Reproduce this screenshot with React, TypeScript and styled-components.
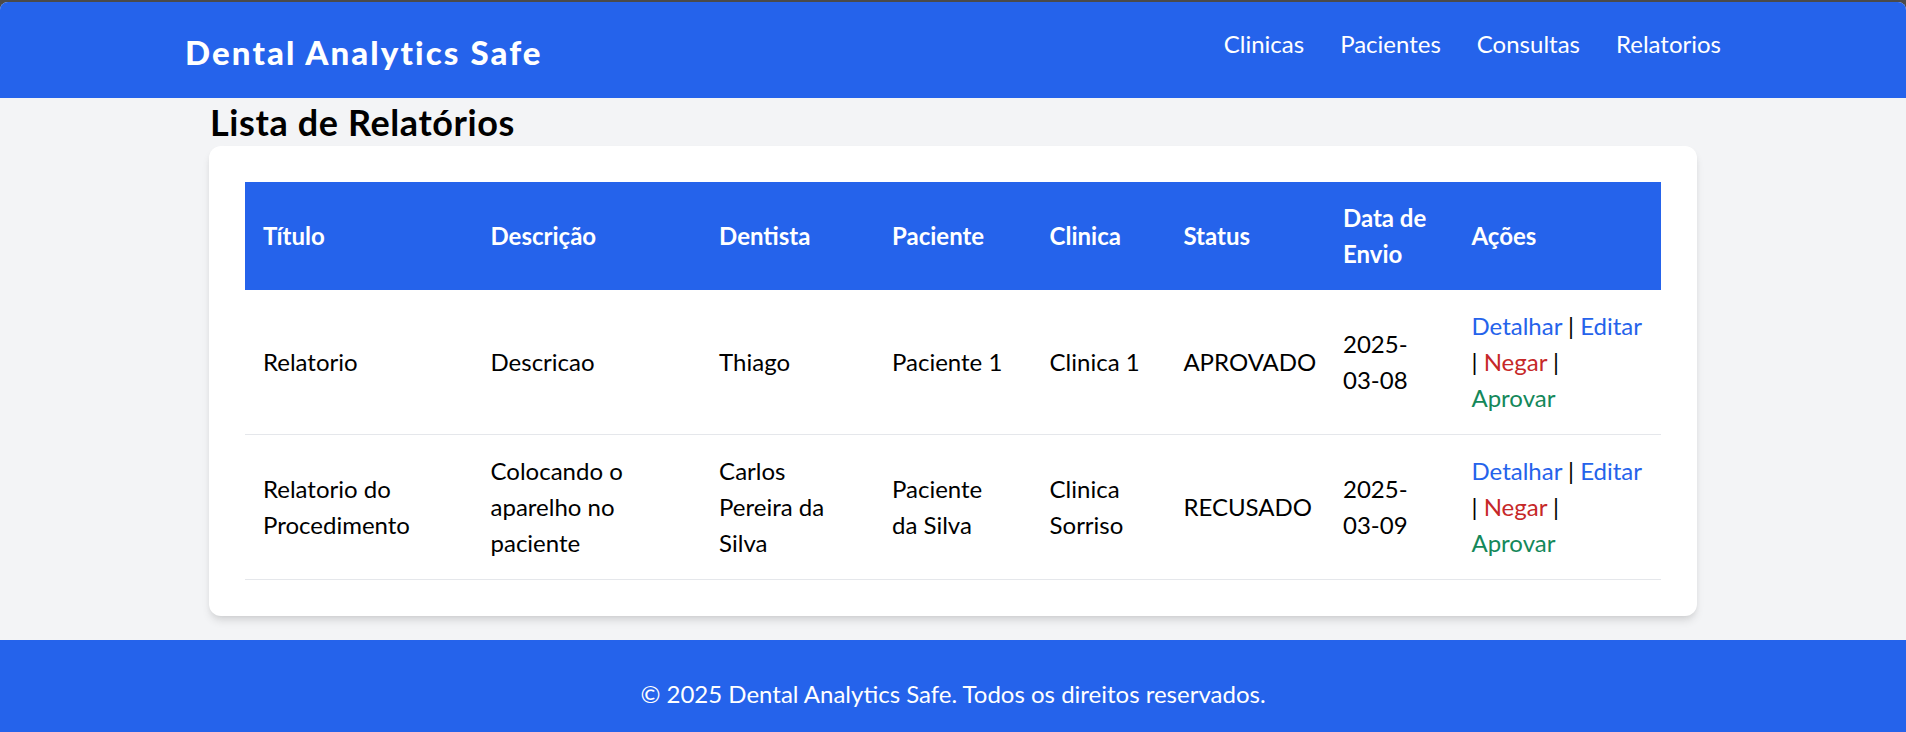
import React from "react";
import styled, { createGlobalStyle } from "styled-components";

const GlobalStyle = createGlobalStyle`
  html, body {
    margin: 0;
    padding: 0;
    background: #4a4a4a;
  }
  body {
    font-family: Lato, "Noto Sans", "Liberation Sans", sans-serif;
    color: #000;
  }
  * { box-sizing: border-box; }
`;

const Frame = styled.div`
  margin-top: 2px;
  border-radius: 8px 8px 0 0;
  overflow: hidden;
  background: #f3f4f6;
`;

const Header = styled.header`
  background: #2563eb;
  height: 96px;
`;

const HeaderInner = styled.div`
  width: 1536px;
  margin: 0 auto;
  padding-top: 24px;
  display: flex;
  justify-content: space-between;
  align-items: flex-start;
`;

const Brand = styled.div`
  margin-top: 5px;
  font-size: 33px;
  line-height: 42px;
  font-weight: 900;
  letter-spacing: 2.1px;
  color: #fff;
`;

const Nav = styled.nav`
  display: flex;
  gap: 36px;
`;

const NavLink = styled.a`
  font-size: 24px;
  line-height: 36px;
  color: #fff;
  text-decoration: none;
`;

const Main = styled.main`
  width: 1536px;
  margin: 0 auto;
  padding: 0 24px;
`;

const PageTitle = styled.h1`
  margin: 0;
  font-size: 36px;
  line-height: 48px;
  font-weight: 700;
  letter-spacing: 0.6px;
  padding-left: 1px;
`;

const Card = styled.section`
  background: #fff;
  border-radius: 12px;
  padding: 36px;
  margin-bottom: 24px;
  box-shadow: 0 6px 9px -1.5px rgba(0, 0, 0, 0.1), 0 3px 6px -3px rgba(0, 0, 0, 0.1);
`;

const Table = styled.table`
  width: 100%;
  border-collapse: collapse;
  table-layout: fixed;
  font-size: 24px;
  line-height: 36px;
`;

const Th = styled.th`
  background: #2563eb;
  color: #fff;
  font-weight: 700;
  text-align: left;
  padding: 18px;
  vertical-align: middle;
`;

const Td = styled.td`
  padding: 18px;
  border-bottom: 1px solid #e5e7eb;
  vertical-align: middle;
`;

const Action = styled.a<{ $tone: "blue" | "red" | "green" }>`
  text-decoration: none;
  color: ${(p) =>
    p.$tone === "blue" ? "#2563eb" : p.$tone === "red" ? "#c62828" : "#14885a"};
`;

const Footer = styled.footer`
  background: #2563eb;
  color: #fff;
  text-align: center;
  padding: 36px 0;
  font-size: 24px;
  line-height: 36px;
`;

const columns = [227.5, 228.6, 172.9, 157.6, 133.8, 159.6, 128.5, 208];
const headers = ["Título", "Descrição", "Dentista", "Paciente", "Clinica", "Status", "Data de Envio", "Ações"];

const rows = [
  {
    titulo: "Relatorio",
    descricao: "Descricao",
    dentista: "Thiago",
    paciente: "Paciente 1",
    clinica: "Clinica 1",
    status: "APROVADO",
    data: "2025-03-08",
  },
  {
    titulo: "Relatorio do Procedimento",
    descricao: "Colocando o aparelho no paciente",
    dentista: "Carlos Pereira da Silva",
    paciente: "Paciente da Silva",
    clinica: "Clinica Sorriso",
    status: "RECUSADO",
    data: "2025-03-09",
  },
];

export default function App() {
  return (
    <>
      <GlobalStyle />
      <Frame>
        <Header>
          <HeaderInner>
            <Brand>Dental Analytics Safe</Brand>
            <Nav>
              <NavLink href="#">Clinicas</NavLink>
              <NavLink href="#">Pacientes</NavLink>
              <NavLink href="#">Consultas</NavLink>
              <NavLink href="#">Relatorios</NavLink>
            </Nav>
          </HeaderInner>
        </Header>
        <Main>
          <PageTitle>Lista de Relatórios</PageTitle>
          <Card>
            <Table>
              <colgroup>
                {columns.map((w, i) => (
                  <col key={i} style={{ width: w }} />
                ))}
              </colgroup>
              <thead>
                <tr>
                  {headers.map((h) => (
                    <Th key={h}>{h}</Th>
                  ))}
                </tr>
              </thead>
              <tbody>
                {rows.map((r) => (
                  <tr key={r.titulo}>
                    <Td>{r.titulo}</Td>
                    <Td>{r.descricao}</Td>
                    <Td>{r.dentista}</Td>
                    <Td>{r.paciente}</Td>
                    <Td>{r.clinica}</Td>
                    <Td>{r.status}</Td>
                    <Td>{r.data}</Td>
                    <Td>
                      <Action $tone="blue" href="#">Detalhar</Action> |{" "}
                      <Action $tone="blue" href="#">Editar</Action> |{" "}
                      <Action $tone="red" href="#">Negar</Action> |{" "}
                      <Action $tone="green" href="#">Aprovar</Action>
                    </Td>
                  </tr>
                ))}
              </tbody>
            </Table>
          </Card>
        </Main>
        <Footer>© 2025 Dental Analytics Safe. Todos os direitos reservados.</Footer>
      </Frame>
    </>
  );
}
